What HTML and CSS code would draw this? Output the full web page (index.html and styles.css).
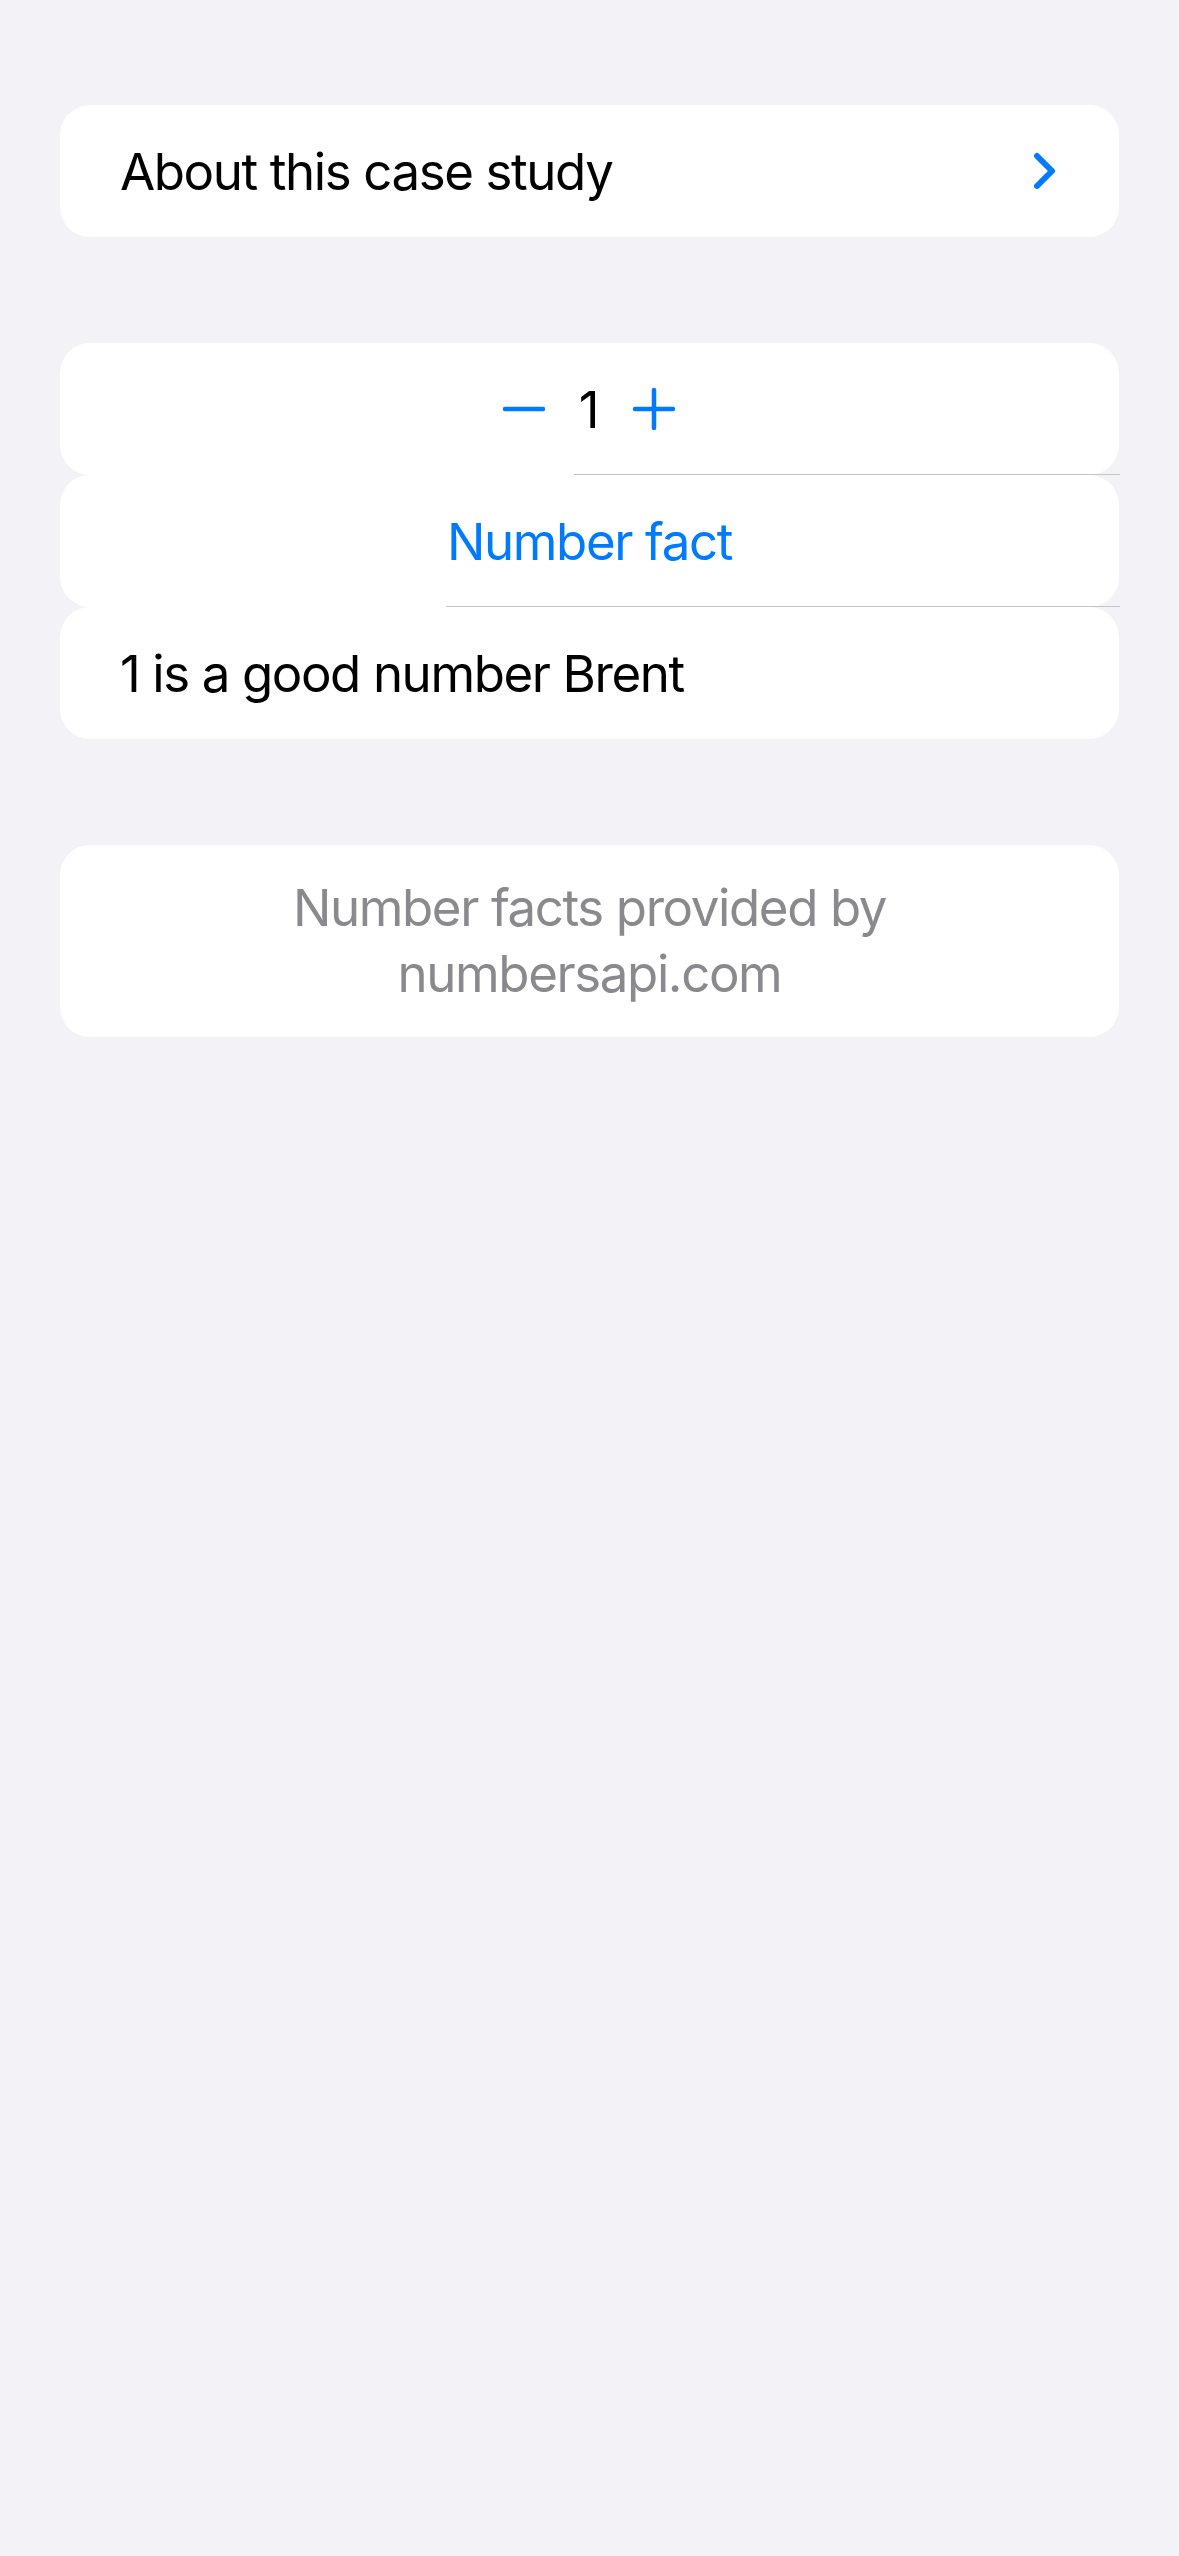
FILE: index.html
```html
<!DOCTYPE html>
<html lang="en">
<head>
<meta charset="utf-8">
<title>Number fact</title>
<link rel="stylesheet" href="styles.css">
</head>
<body>
<main class="screen">
  <section class="group">
    <div class="row row-link">
      <span class="label">About this case study</span>
      <svg class="chevron" width="24" height="38" viewBox="0 0 24 38" aria-hidden="true">
        <path d="M4 4 L19 19 L4 34" fill="none" stroke="#007aff" stroke-width="6" stroke-linecap="round" stroke-linejoin="round"/>
      </svg>
    </div>
  </section>

  <section class="group">
    <div class="row row-center">
      <div class="stepper">
        <svg class="step-icon" width="44" height="44" viewBox="0 0 44 44" aria-hidden="true">
          <path d="M3 22 H41" stroke="#007aff" stroke-width="4.5" stroke-linecap="round"/>
        </svg>
        <span class="count">1</span>
        <svg class="step-icon" width="44" height="44" viewBox="0 0 44 44" aria-hidden="true">
          <path d="M3 22 H41 M22 3 V41" stroke="#007aff" stroke-width="4.5" stroke-linecap="round"/>
        </svg>
      </div>
      <span class="sep sep-stepper"></span>
    </div>
    <div class="row row-center">
      <span class="action">Number fact</span>
      <span class="sep sep-action"></span>
    </div>
    <div class="row">
      <span class="label">1 is a good number Brent</span>
    </div>
  </section>

  <section class="group">
    <div class="row footer">
      <p class="footnote">Number facts provided by<br>numbersapi.com</p>
    </div>
  </section>
</main>
</body>
</html>
```

FILE: styles.css
```css
html, body {
  margin: 0;
  padding: 0;
  background: #f2f2f7;
}

body {
  font-family: Inter, "Noto Sans", "Liberation Sans", sans-serif;
  font-size: 51px;
  color: #000;
  -webkit-font-smoothing: antialiased;
}

.screen {
  display: flex;
  flex-direction: column;
  gap: 106px;
  padding: 105px 60px 0;
  min-height: 2556px;
  box-sizing: border-box;
}

.group {
  display: flex;
  flex-direction: column;
}

.row {
  position: relative;
  display: flex;
  align-items: center;
  height: 132px;
  padding: 0 60px;
  background: #fff;
  border-radius: 30px;
  box-sizing: border-box;
}

.row-link {
  justify-content: space-between;
  padding-right: 62px;
}

.row-center {
  justify-content: center;
}

.label {
  letter-spacing: -1.4px;
  line-height: 1;
}

.chevron {
  display: block;
}

.stepper {
  display: flex;
  align-items: center;
  gap: 33px;
  margin-left: -1px;
}

.step-icon {
  display: block;
}

.count {
  line-height: 1;
  font-size: 51px;
}

.action {
  color: #007aff;
  letter-spacing: -1.4px;
  line-height: 1;
}

.sep {
  position: absolute;
  right: -1px;
  bottom: 0;
  height: 1.5px;
  background: #c6c6c8;
}

.sep-stepper {
  left: 514px;
}

.sep-action {
  left: 386px;
}

.footer {
  height: 192px;
  justify-content: center;
}

.footnote {
  margin: 0;
  text-align: center;
  color: #8a8a8e;
  line-height: 66px;
  letter-spacing: -1.4px;
}
```
